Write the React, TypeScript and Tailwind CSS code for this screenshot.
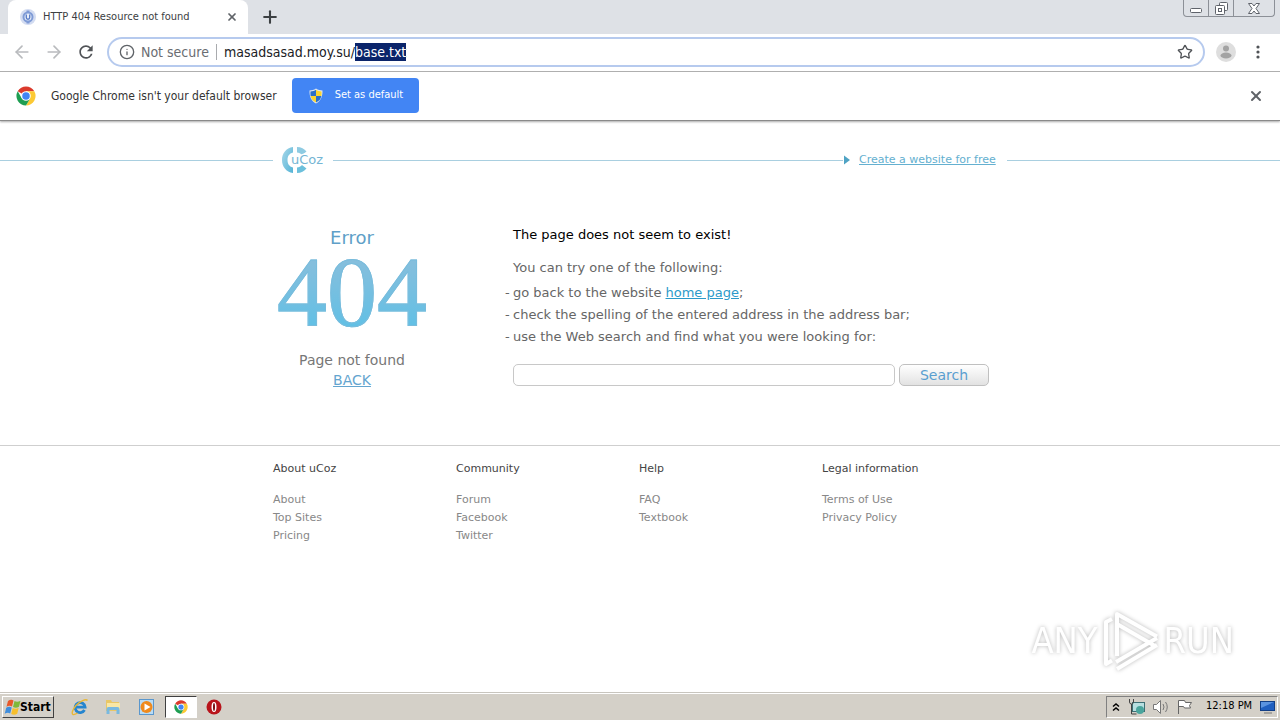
import { useEffect, useRef } from 'react'
import { ArrowLeft, ArrowRight, Info, Plus, Star, X } from 'lucide-react'
import { MdRefresh } from 'react-icons/md'

const footerGroups = [
  { title: 'About uCoz', links: ['About', 'Top Sites', 'Pricing'] },
  { title: 'Community', links: ['Forum', 'Facebook', 'Twitter'] },
  { title: 'Help', links: ['FAQ', 'Textbook'] },
  { title: 'Legal information', links: ['Terms of Use', 'Privacy Policy'] }
]

const ChromeIcon = ({ className }: { className?: string }) => (
  <svg viewBox="0 0 48 48" className={className} aria-hidden="true">
    <circle cx="24" cy="24" r="23" fill="#fff" />
    <path d="M24 24 4.1 12.5A23 23 0 0 1 43.9 12.5H24z" fill="#db3a2c" />
    <path d="M24 12.5h19.9A23 23 0 0 1 24 47l10-17.2z" fill="#fcc934" />
    <path d="M4.1 12.5A23 23 0 0 0 24 47l10-17.2-20 0z" fill="#1e9e52" />
    <circle cx="24" cy="24" r="11.5" fill="#fff" />
    <circle cx="24" cy="24" r="9" fill="#4285f4" />
  </svg>
)

const ShieldIcon = () => (
  <svg viewBox="0 0 16 16" className="h-4 w-4" aria-hidden="true">
    <path d="M8 0.5C10 2 12.5 2.4 14.5 2.5 14.6 8.5 13 13 8 15.5 3 13 1.4 8.5 1.5 2.5 3.5 2.4 6 2 8 0.5z" fill="#dfe7ef" />
    <path d="M8 1.8V8H2.6C2.4 6.5 2.4 5 2.5 3.5 4.5 3.4 6.5 2.9 8 1.8z" fill="#2a6fc9" />
    <path d="M8 1.8V8h5.4c.2-1.5.2-3 .1-4.5C11.5 3.4 9.500 2.9 8 1.800z" fill="#f9d42f" />
    <path d="M8 8H2.6C3.2 11 5 13.2 8 14.5z" fill="#f9d42f" />
    <path d="M8 8h5.4C12.8 11 11 13.2 8 14.5z" fill="#2a6fc9" />
  </svg>
)

const TabStrip = () => (
  <div className="flex h-[34px] items-start justify-between bg-[#dee1e6] pl-2">
    <div className="flex h-full items-center">
      <div className="flex h-full w-60 items-center rounded-t-lg bg-white pl-3 pr-2">
        <svg viewBox="0 0 16 16" className="h-4 w-4 shrink-0" aria-hidden="true">
          <circle cx="8" cy="8" r="8" fill="#d3dcf1" />
          <path d="M8 1.5v13" stroke="#7f9bd6" strokeWidth="3" />
          <circle cx="8" cy="8" r="4.5" fill="#e8eefa" stroke="#7f9bd6" strokeWidth="2" />
          <path d="M6.3 5.5v3a1.7 1.7 0 0 0 3.4 0v-3" fill="none" stroke="#5d7fc8" strokeWidth="1.4" />
        </svg>
        <span className="ml-[7px] flex-1 whitespace-nowrap text-[11px] text-[#3c4043]">HTTP 404 Resource not found</span>
        <button type="button" aria-label="Close tab" className="flex h-4 w-4 items-center justify-center text-[#5f6368]">
          <X className="h-3 w-3" strokeWidth={3.5} />
        </button>
      </div>
      <button type="button" aria-label="New tab" className="ml-3 text-[#3c4043]">
        <Plus className="h-5 w-5" strokeWidth={2.5} />
      </button>
    </div>
    <div className="mr-[5px] flex h-[17px] rounded-b border border-t-0 border-[#8c9097] text-[#5f636b]">
      <button type="button" aria-label="Minimize" className="flex w-6 items-center justify-center">
        <svg viewBox="0 0 12 12" className="mt-1 h-3 w-3" fill="#fff" stroke="currentColor">
          <rect x="0.5" y="4.5" width="11" height="4" rx="1" />
        </svg>
      </button>
      <button type="button" aria-label="Restore" className="flex w-[26px] items-center justify-center border-x border-[#8c9097]">
        <svg viewBox="0 0 13 13" className="h-[13px] w-[13px]" fill="#fff" stroke="currentColor">
          <rect x="4.5" y="0.5" width="8" height="8" rx="1" />
          <rect x="0.5" y="3.5" width="9" height="9" rx="1" />
          <rect x="3.5" y="6.5" width="3" height="3" />
        </svg>
      </button>
      <button type="button" aria-label="Close" className="flex w-10 items-center justify-center">
        <svg viewBox="0 0 12 11" className="h-[11px] w-3" fill="#fff" stroke="currentColor">
          <path d="M.5.5h3.500L6 3 8 .5h3.500L8 5.500l3.500 5H8L6 8l-2 2.500H.5L4 5.500z" />
        </svg>
      </button>
    </div>
  </div>
)

const Toolbar = () => {
  const addressRef = useRef<HTMLInputElement>(null)

  // the file name part of the address starts out selected
  useEffect(() => {
    const input = addressRef.current
    if (!input) return
    input.focus()
    input.setSelectionRange(input.value.indexOf('/') + 1, input.value.length)
  }, [])

  return (
    <div className="flex h-[38px] items-center border-b border-[#b0b0b0] bg-white pr-3.5 pb-px pl-3">
      <button type="button" aria-label="Back" className="text-[#b9bbbe]">
        <ArrowLeft className="h-5 w-5" />
      </button>
      <button type="button" aria-label="Forward" className="ml-3 text-[#b9bbbe]">
        <ArrowRight className="h-5 w-5" />
      </button>
      <button type="button" aria-label="Reload" className="ml-3 text-[#505357]">
        <MdRefresh className="h-5 w-5" />
      </button>
      <div className="ml-[11px] flex h-[30px] flex-1 items-center rounded-full border-2 border-[#b6caee] pl-2.5 pr-2.5 text-sm">
        <Info className="h-4 w-4 shrink-0 text-[#5f6368]" />
        <span className="ml-1.5 whitespace-nowrap text-[#6a6d72]">Not secure</span>
        <span className="mx-[7px] h-4 w-px shrink-0 bg-[#a9abae]" />
        <input
          ref={addressRef}
          aria-label="Address"
          defaultValue="masadsasad.moy.su/base.txt"
          spellCheck={false}
          className="h-[18px] min-w-0 flex-1 bg-transparent leading-[18px] text-[#202124] caret-transparent outline-none selection:bg-[#0a246a] selection:text-white"
        />
        <button type="button" aria-label="Bookmark this page" className="text-[#505357]">
          <Star className="h-4 w-4" />
        </button>
      </div>
      <button type="button" aria-label="Profile" className="ml-[11px]">
        <svg viewBox="0 0 20 20" className="h-5 w-5">
          <circle cx="10" cy="10" r="10" fill="#dedede" />
          <circle cx="10" cy="6.5" r="3" fill="#a3a3a3" />
          <ellipse cx="10" cy="13.5" rx="5.5" ry="3" fill="#a3a3a3" />
        </svg>
      </button>
      <button type="button" aria-label="Menu" className="ml-3.5 text-[#505357]">
        <svg viewBox="0 0 16 16" className="h-4 w-4" fill="currentColor">
          <circle cx="8" cy="3" r="1.6" />
          <circle cx="8" cy="8" r="1.6" />
          <circle cx="8" cy="13" r="1.6" />
        </svg>
      </button>
    </div>
  )
}

const DefaultBrowserBar = () => (
  <div className="z-10 flex h-[49px] items-center border-b border-[#8a8a8a] bg-white px-4 pb-px shadow-[0_1px_2px_#aaaaaa]">
    <ChromeIcon className="h-5 w-5" />
    <span className="ml-[15px] whitespace-nowrap text-xs text-[#333]">Google Chrome isn't your default browser</span>
    <button type="button" className="ml-[15px] flex h-[35px] w-[127px] items-center rounded bg-[#4285f4] pl-4 text-[11px] whitespace-nowrap text-white">
      <ShieldIcon />
      <span className="ml-[11px]">Set as default</span>
    </button>
    <button type="button" aria-label="Dismiss" className="ml-auto text-[#5f6368]">
      <X className="h-4 w-4" strokeWidth={3} />
    </button>
  </div>
)

const UcozLogo = () => (
  <svg viewBox="0 0 44 28" className="h-7 w-11" role="img" aria-label="uCoz">
    <defs>
      <linearGradient id="ring" x1="0" y1="0" x2="1" y2="1">
        <stop offset="0" stopColor="#a9d8ea" />
        <stop offset="1" stopColor="#55b4d6" />
      </linearGradient>
    </defs>
    <path d="M12 1v5.500C8 7.500 6.500 10.500 6.500 14s1.500 6.500 5.500 7.500V27C5 26 1 20.500 1 14S5 2 12 1z" fill="url(#ring)" />
    <path d="M16 1c4 0 7.500 2 9.500 4.500L21 9c-1.200-1.500-3-2.300-5-2.500z" fill="#8fcbe2" />
    <path d="M16 27c4 0 7.500-2 9.500-4.500L21 19c-1.200 1.500-3 2.300-5 2.500z" fill="#6cc0dc" />
    <text x="10" y="18" fontFamily="DejaVu Sans" fontSize="13" fill="#74b5d4" stroke="#fff" strokeWidth="3" paintOrder="stroke">
      uCoz
    </text>
  </svg>
)

const SiteHeader = () => (
  <header className="flex items-center pt-[25px]">
    <div className="h-px flex-1 bg-[#a9cfe0]" />
    <div className="flex w-[734px] items-center">
      <a href="#ucoz" className="mx-2">
        <UcozLogo />
      </a>
      <div className="h-px flex-1 bg-[#a9cfe0]" />
      <svg viewBox="0 0 7 10" className="h-2.5 w-[7px]" fill="#4fa3c4" aria-hidden="true">
        <path d="M1 0.5 7 5 1 9.5z" />
      </svg>
      <a href="#create" className="ml-[9px] w-[148px] text-[11px] text-[#64b0d0] underline">
        Create a website for free
      </a>
    </div>
    <div className="h-px flex-1 bg-[#a9cfe0]" />
  </header>
)

const ErrorContent = () => (
  <main className="mx-auto flex w-full max-w-[734px] pt-[52px]">
    <div className="flex w-[158px] flex-col items-center">
      <h1 className="flex flex-col items-center">
        <span className="text-lg leading-6 text-[#609fc8]">Error</span>
        <span className="bg-linear-to-b from-[#8abedb] to-[#5cc0e6] bg-clip-text font-['Liberation_Serif',serif] text-[100px] leading-[84px] text-transparent [-webkit-text-stroke:1px_#79bcdc]">
          404
        </span>
      </h1>
      <p className="mt-4 text-sm leading-5 text-[#777]">Page not found</p>
      <a href="#back" className="text-sm leading-5 text-[#64a5cf] underline">BACK</a>
    </div>
    <div className="ml-[82px] flex-1 text-[13px] leading-[18px] text-[#666]">
      <h2 className="text-black">The page does not seem to exist!</h2>
      <p className="mt-[15px]">You can try one of the following:</p>
      <ul className="mt-[5px] -ml-2 whitespace-nowrap leading-[22px]">
        <li className="flex">
          <span className="w-2">-</span>
          <span>
            go back to the website <a href="#home" className="text-[#2c9ac9] underline">home page</a>;
          </span>
        </li>
        <li className="flex">
          <span className="w-2">-</span>
          <span>check the spelling of the entered address in the address bar;</span>
        </li>
        <li className="flex">
          <span className="w-2">-</span>
          <span>use the Web search and find what you were looking for:</span>
        </li>
      </ul>
      <form className="mt-4 flex gap-1" onSubmit={(e) => e.preventDefault()}>
        <input type="text" aria-label="Web search" className="h-[22px] w-[382px] rounded-[5px] border border-[#c8c8c8] px-2 outline-none" />
        <button type="submit" className="h-[22px] w-[90px] rounded-[5px] border border-[#c0c0c0] bg-linear-to-b from-white to-[#e2e2e2] text-sm leading-5 text-[#5a9fd0]">
          Search
        </button>
      </form>
    </div>
  </main>
)

const SiteFooter = () => (
  <footer className="mt-[55px] border-t border-[#cfcfcf] pt-3.5 text-[11px] leading-[18px]">
    <div className="mx-auto grid max-w-[734px] grid-cols-4 pr-0.5">
      {footerGroups.map((group) => (
        <div key={group.title}>
          <h3 className="text-[#444]">{group.title}</h3>
          <ul className="mt-[13px] text-[#888]">
            {group.links.map((link) => (
              <li key={link}>
                <a href="#footer">{link}</a>
              </li>
            ))}
          </ul>
        </div>
      ))}
    </div>
  </footer>
)

const Watermark = () => (
  <div className="absolute right-[46px] bottom-5 flex items-center gap-1 font-['DejaVu_Sans_Condensed',sans-serif] text-4xl leading-none text-white drop-shadow-[0_0_2px_#b8b8b8]">
    <span>ANY</span>
    <svg viewBox="0 0 58 62" className="h-[62px] w-[58px]" fill="none" stroke="currentColor" strokeWidth="4" strokeLinejoin="round" aria-hidden="true">
      <path d="M15 46V4l40 22.500M15 14l38 22" />
      <path d="M10 9 4 12v42l6-3.500" />
      <path d="M14 52 55 28M15 59l40-24" />
    </svg>
    <span>RUN</span>
  </div>
)

const WindowsFlag = () => (
  <svg viewBox="0 0 18 18" className="h-[18px] w-[18px]" aria-hidden="true">
    <path d="M4 3c2-1.500 4-1.500 5.500-.5L8 8.500C6.500 7.500 4.500 7.500 2.500 8.700z" fill="#e8582a" />
    <path d="M10.500 3c2 1 4 .8 6-.3L15 8.800c-2 1.200-4 1.200-6 .2z" fill="#7fb83a" />
    <path d="M2.200 9.700c2-1.200 4-1.200 5.500-.2L6.200 15.500C4.700 14.500 2.700 14.500.7 15.700z" fill="#3f8ddc" />
    <path d="M8.700 10c2 1 4 1 6-.2l-1.500 6c-2 1.200-4 1.200-6 .2z" fill="#f7bf2c" />
  </svg>
)

const Taskbar = () => (
  <div className="flex h-7 items-center border-t border-[#c8c5be] bg-[#d4d0c8] px-0.5 shadow-[inset_0_1px_0_#ffffff]">
    <button type="button" className="flex h-[22px] w-[52px] items-center border border-t-white border-r-[#404040] border-b-[#404040] border-l-white pl-px text-xs font-bold text-black">
      <WindowsFlag />
      <span className="-ml-0.5">Start</span>
    </button>
    <button type="button" aria-label="Internet Explorer" className="ml-[17px]">
      <svg viewBox="0 0 18 18" className="h-[18px] w-[18px]" fill="none">
        <path d="M13.500 12a5 5 0 1 1 .6-2.800H5" stroke="#2585cf" strokeWidth="2.800" />
        <path d="M16.500 2.500C15 .5 9 3 5 7.500S.5 16 2 16.500c1 .3 3-.5 4.500-1.500" stroke="#e9b735" strokeWidth="1.400" />
      </svg>
    </button>
    <button type="button" aria-label="Explorer" className="ml-[15px]">
      <svg viewBox="0 0 18 18" className="h-[18px] w-[18px]">
        <path d="M2 2h5l1 2h7v9H2z" fill="#e9c766" />
        <path d="M3 5h13v7H3z" fill="#f9e7a5" />
        <path d="M2.500 16V11a2 2 0 0 1 2-2h9a2 2 0 0 1 2 2v5h-3v-4h-7v4z" fill="#79b9e0" />
      </svg>
    </button>
    <button type="button" aria-label="Media Player" className="ml-4">
      <svg viewBox="0 0 18 18" className="h-[18px] w-[18px]">
        <rect x="1.5" y="1.5" width="14" height="15" fill="#b9dcf5" stroke="#5a97cd" />
        <circle cx="8.5" cy="9" r="6" fill="#ef8a1d" />
        <path d="M6.500 5.500v7l6-3.500z" fill="#fff" />
      </svg>
    </button>
    <button type="button" aria-label="Google Chrome" className="ml-[9px] flex h-[22px] w-8 items-center justify-center border border-t-[#404040] border-r-white border-b-white border-l-[#404040] bg-white">
      <ChromeIcon className="h-3.5 w-3.5" />
    </button>
    <button type="button" aria-label="Opera" className="ml-2">
      <svg viewBox="0 0 18 18" className="h-[18px] w-[18px]">
        <circle cx="9" cy="9" r="7.5" fill="#b8141b" />
        <ellipse cx="9" cy="9" rx="2.5" ry="5" fill="#fff" />
        <ellipse cx="9" cy="9" rx="1" ry="4" fill="#7a0a10" />
      </svg>
    </button>
    <div className="ml-auto flex h-[22px] w-[172px] items-center border border-t-[#808080] border-r-white border-b-white border-l-[#808080] pl-1">
      <svg viewBox="0 0 10 10" className="h-2.5 w-2.5" fill="none" stroke="#000" strokeWidth="1.5" aria-hidden="true">
        <path d="M2 4.500 5 2l3 2.500M2 8.500 5 6l3 2.500" />
      </svg>
      <svg viewBox="0 0 18 18" className="ml-[7px] h-[18px] w-[18px]" aria-hidden="true">
        <rect x="4.5" y="4.5" width="12" height="9" fill="#b7dfe0" stroke="#3d6f75" />
        <circle cx="12" cy="12" r="4" fill="#4aa59d" />
        <path d="M1.500 1v3a2 2 0 0 0 4 0V1M3.500 6v10h5" fill="none" stroke="#444" />
      </svg>
      <svg viewBox="0 0 18 18" className="ml-1.5 h-[18px] w-[18px]" fill="#fff" stroke="#777" aria-hidden="true">
        <path d="M1.500 6.500h3l4-4v13l-4-4h-3z" />
        <path d="M11 6q2 3 0 6M13.500 4q3.500 5 0 10" fill="none" />
      </svg>
      <svg viewBox="0 0 18 18" className="ml-1.5 h-[18px] w-[18px]" fill="#fff" stroke="#666" aria-hidden="true">
        <path d="M2.500 16V2.500h6l1 2h6l-2 3 1 2.500h-6l-1-1.500h-5" />
      </svg>
      <span className="ml-3 whitespace-nowrap text-[11px] text-black">12:18 PM</span>
      <svg viewBox="0 0 16 14" className="ml-2 h-3.5 w-4 shrink-0" aria-hidden="true">
        <rect x="0.5" y="1.5" width="14" height="9" fill="#1f5fc0" stroke="#123f86" />
        <path d="M1 2h13L1 8z" fill="#5a93e0" />
        <path d="M4 13h8" stroke="#777" />
      </svg>
    </div>
  </div>
)

const App = () => (
  <div className="flex min-h-screen flex-col bg-white font-['DejaVu_Sans_Condensed','DejaVu_Sans',sans-serif]">
    <TabStrip />
    <Toolbar />
    <DefaultBrowserBar />
    <div className="relative flex-1 font-['DejaVu_Sans',sans-serif]">
      <SiteHeader />
      <ErrorContent />
      <SiteFooter />
      <Watermark />
    </div>
    <Taskbar />
  </div>
)

export default App
